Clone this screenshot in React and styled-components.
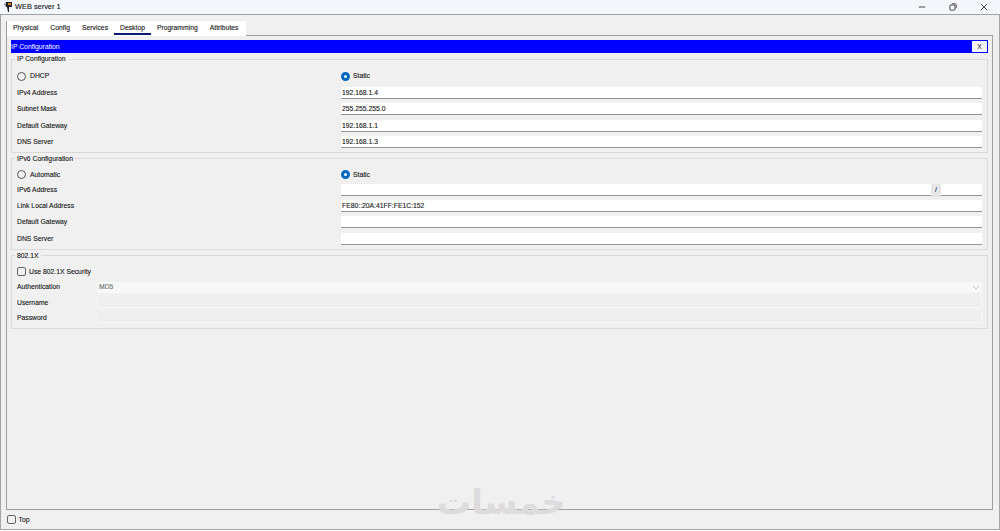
import React from "react"
import styled, { createGlobalStyle } from "styled-components"

const GlobalStyle = createGlobalStyle`
  html, body {
    margin: 0;
    overflow: hidden;
  }
  * {
    box-sizing: border-box;
  }
`

const tabs = ["Physical", "Config", "Services", "Desktop", "Programming", "Attributes"]

const ipv4Rows = [
  ["IPv4 Address", "192.168.1.4"],
  ["Subnet Mask", "255.255.255.0"],
  ["Default Gateway", "192.168.1.1"],
  ["DNS Server", "192.168.1.3"],
]

const ipv6Rows = [
  ["Link Local Address", "FE80::20A:41FF:FE1C:152"],
  ["Default Gateway", ""],
  ["DNS Server", ""],
]

function AppIcon() {
  return (
    <svg width="10" height="12" viewBox="0 0 10 12">
      <path d="M1 3 L3 1 L4 4 L2 6 Z" fill="#9aa0a8" />
      <path d="M3 1 H9 V6 H6 L6 11 H5 L4 6 H3 Z" fill="#2a2420" />
      <path d="M5 2 H8 V4 H5 Z" fill="#d9822b" />
    </svg>
  )
}

export default function App() {
  return (
    <>
      <GlobalStyle />
      <Window>
        <TitleBar>
          <TitleGroup>
            <AppIcon />
            <Title>WEB server 1</Title>
          </TitleGroup>
          <Controls>
            <ControlIcon viewBox="0 0 10 10">
              <path d="M1 5 H9" />
            </ControlIcon>
            <ControlIcon viewBox="0 0 10 10">
              <rect x="1" y="2.5" width="6.5" height="6.5" rx="1.5" />
              <path d="M3.5 1 H7.5 Q9 1 9 2.5 V6.5" />
            </ControlIcon>
            <ControlIcon viewBox="0 0 10 10">
              <path d="M1 1 L9 9 M9 1 L1 9" />
            </ControlIcon>
          </Controls>
        </TitleBar>

        <TabStrip>
          {tabs.map((tab) => (
            <Tab key={tab} $active={tab === "Desktop"}>
              {tab}
            </Tab>
          ))}
        </TabStrip>

        <Panel>
          <BlueBar>
            <span>IP Configuration</span>
            <CloseButton>X</CloseButton>
          </BlueBar>

          <Sections>
            <Section $top={7}>
              <Legend>IP Configuration</Legend>
              <RadioRow $gap={5}>
                <Choice>
                  <Radio />
                  DHCP
                </Choice>
                <Choice>
                  <Radio $checked />
                  Static
                </Choice>
              </RadioRow>
              <Rows>
                {ipv4Rows.map(([label, value]) => (
                  <FieldRow key={label}>
                    <Label>{label}</Label>
                    <Field>{value}</Field>
                  </FieldRow>
                ))}
              </Rows>
            </Section>

            <Section $top={6}>
              <Legend>IPv6 Configuration</Legend>
              <RadioRow $gap={3}>
                <Choice>
                  <Radio />
                  Automatic
                </Choice>
                <Choice>
                  <Radio $checked />
                  Static
                </Choice>
              </RadioRow>
              <Rows>
                <FieldRow>
                  <Label>IPv6 Address</Label>
                  <PrefixGroup>
                    <Field />
                    <Slash>/</Slash>
                    <Field />
                  </PrefixGroup>
                </FieldRow>
                {ipv6Rows.map(([label, value]) => (
                  <FieldRow key={label}>
                    <Label>{label}</Label>
                    <Field>{value}</Field>
                  </FieldRow>
                ))}
              </Rows>
            </Section>

            <Section $top={6} $bottom={5}>
              <Legend>802.1X</Legend>
              <CheckRow>
                <CheckBox />
                Use 802.1X Security
              </CheckRow>
              <AuthRows>
                <AuthRow>
                  <Label>Authentication</Label>
                  <SelectBox>
                    MD5
                    <svg width="8" height="5" viewBox="0 0 8 5">
                      <path d="M1 1 L4 4 L7 1" fill="none" stroke="#c4c4c4" />
                    </svg>
                  </SelectBox>
                </AuthRow>
                <AuthRow>
                  <Label>Username</Label>
                  <DisabledField />
                </AuthRow>
                <AuthRow>
                  <Label>Password</Label>
                  <DisabledField />
                </AuthRow>
              </AuthRows>
            </Section>
          </Sections>
        </Panel>

        <BottomBar>
          <CheckBox />
          Top
        </BottomBar>

        <Watermark>خمسات</Watermark>
      </Window>
    </>
  )
}

const Window = styled.div`
  position: relative;
  width: 1000px;
  height: 530px;
  display: flex;
  flex-direction: column;
  background: #f0f0f0;
  border-left: 1px solid #a4a4ac;
  border-right: 1px solid #a4a4ac;
  border-bottom: 1px solid #a4a4ac;
  font-family: "Liberation Sans", Arial, sans-serif;
  font-size: 6.8px;
  line-height: 8px;
  color: #111;
  -webkit-text-stroke: 0.12px #333;
`

const TitleBar = styled.div`
  height: 15px;
  margin: 0 -1px;
  padding: 0 12.5px 0 3px;
  display: flex;
  align-items: center;
  justify-content: space-between;
  background: #f3f6fb;
  border-bottom: 1px solid #a2a2a2;
`

const TitleGroup = styled.div`
  display: flex;
  align-items: center;
  gap: 2px;
`

const Title = styled.span`
  font-size: 7.4px;
`

const Controls = styled.div`
  display: flex;
  align-items: center;
  gap: 23px;
`

const ControlIcon = styled.svg`
  width: 8px;
  height: 8px;
  fill: none;
  stroke: #333;
  stroke-width: 1.1;
`

const TabStrip = styled.div`
  position: relative;
  z-index: 1;
  width: 240px;
  height: 15px;
  margin: 6px 0 -1px 5px;
  display: flex;
  background: #fff;
  border-left: 1px solid #a0a0a0;
`

const Tab = styled.div`
  height: 14px;
  padding: 3px 6px 0;
  border-bottom: 2px solid ${(p) => (p.$active ? "#0a1a6e" : "transparent")};
`

const Panel = styled.div`
  flex: 1;
  margin: 0 6px 0 5px;
  padding: 4px 4px 0;
  border: 1px solid #a0a0a0;
  background: #f0f0f0;
`

const BlueBar = styled.div`
  height: 13px;
  padding: 0 1px 0 0;
  display: flex;
  align-items: center;
  justify-content: space-between;
  background: #0000ff;
  color: #fff;
  -webkit-text-stroke: 0;
`

const CloseButton = styled.div`
  width: 15px;
  height: 11px;
  display: flex;
  align-items: center;
  justify-content: center;
  background: #f4f4f4;
  color: #111;
`

const Sections = styled.div`
  width: 977px;
  margin-top: 2px;
  display: flex;
  flex-direction: column;
  gap: 2px;
`

const Section = styled.fieldset`
  margin: 0;
  min-width: 0;
  padding: ${(p) => p.$top}px 5px ${(p) => p.$bottom || 4}px;
  border: 1px solid #d9d9d9;
`

const Legend = styled.legend`
  margin-left: -2px;
  padding: 0 2px;
  line-height: 8px;
`

const RadioRow = styled.div`
  height: 12px;
  margin-bottom: ${(p) => p.$gap}px;
  display: grid;
  grid-template-columns: 324px 1fr;
  align-items: center;
`

const Choice = styled.div`
  display: flex;
  align-items: center;
  gap: 4px;
`

const Radio = styled.span`
  flex: 0 0 9px;
  width: 9px;
  height: 9px;
  margin-right: ${(p) => (p.$checked ? "-1px" : "0")};
  border-radius: 50%;
  background: ${(p) => (p.$checked ? "#fff" : "transparent")};
  border: ${(p) => (p.$checked ? "3px solid #0067c0" : "1px solid #555")};
`

const Rows = styled.div`
  display: flex;
  flex-direction: column;
  gap: 4.3px;
`

const FieldRow = styled.div`
  height: 12px;
  display: grid;
  grid-template-columns: 324px 1fr;
  align-items: center;
`

const Label = styled.span`
  white-space: nowrap;
`

const Field = styled.div`
  height: 12px;
  padding: 1px 1px 0;
  line-height: 9px;
  background: #fff;
  border-bottom: 1px solid #929292;
`

const PrefixGroup = styled.div`
  display: grid;
  grid-template-columns: 590px 10px 1fr;
`

const Slash = styled.div`
  height: 13px;
  display: flex;
  align-items: center;
  justify-content: center;
  background: #e6e6e6;
  color: #001a7a;
`

const CheckRow = styled.div`
  height: 12px;
  margin-bottom: 4px;
  display: flex;
  align-items: center;
  gap: 3px;
`

const CheckBox = styled.span`
  flex: 0 0 9px;
  width: 9px;
  height: 9px;
  border: 1px solid #666;
  border-radius: 2px;
`

const AuthRows = styled.div`
  display: flex;
  flex-direction: column;
  gap: 4.3px;
`

const AuthRow = styled.div`
  height: 11px;
  display: grid;
  grid-template-columns: 80px 1fr;
  align-items: center;
`

const SelectBox = styled.div`
  height: 11px;
  padding: 0 2px;
  display: flex;
  align-items: center;
  justify-content: space-between;
  background: #f8f8f8;
  color: #7c8a8a;
`

const DisabledField = styled.div`
  height: 11px;
  background: #eeeeee;
  border-left: 1px solid #f6f6f6;
  border-right: 1px solid #f8f8f8;
  border-bottom: 1px solid #f8f8f8;
`

const BottomBar = styled.div`
  height: 19px;
  padding-left: 6px;
  display: flex;
  align-items: center;
  gap: 2.5px;
`

const Watermark = styled.div`
  position: absolute;
  left: 436px;
  top: 482px;
  width: 122px;
  text-align: center;
  font-family: "DejaVu Sans", sans-serif;
  font-size: 34px;
  font-weight: 700;
  line-height: 40px;
  color: #dcdcdc;
  -webkit-text-stroke: 0;
  pointer-events: none;
`
